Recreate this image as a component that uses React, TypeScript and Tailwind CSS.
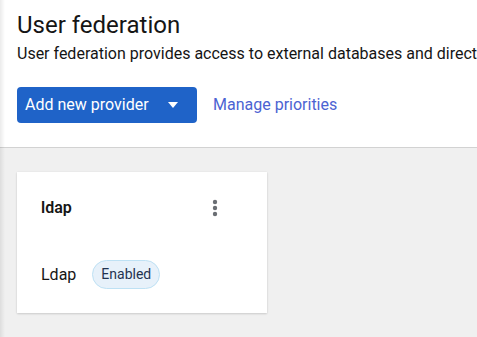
import React from "react";

export default function App() {
  return (
    <div
      className="relative w-[477px] h-[337px] overflow-hidden bg-[#f0f0f0]"
      style={{ fontFamily: 'Roboto, "Liberation Sans", sans-serif' }}
    >
      <div className="pointer-events-none absolute left-0 top-0 h-full w-[5px] bg-gradient-to-r from-[#00000014] to-transparent" />
      <div className="bg-white border-b border-[#d2d2d2] h-[148px] pl-[17px] pt-[7px]">
        <h1 className="text-[24px] leading-[36px] text-[#151515] whitespace-nowrap">User federation</h1>
        <p className="text-[16px] leading-[22px] text-[#151515] whitespace-nowrap">
          User federation provides access to external databases and directories, such as LDAP and Active Directory.
        </p>
        <div className="flex items-center mt-[22px] gap-[16px]">
          <button className="h-[36px] w-[180px] rounded-[4px] bg-[#1f63c8] text-white text-[16px] flex items-center pl-[8px] pr-[16px] justify-between">
            <span>Add new provider</span>
            <svg width="10" height="6" viewBox="0 0 10 6" className="mr-[3px]">
              <path d="M0 0 L10 0 L5 6 Z" fill="white" />
            </svg>
          </button>
          <a className="text-[16px] text-[#4c63d2]">Manage priorities</a>
        </div>
      </div>
      <div className="pl-[17px] pt-[24px]">
        <div className="w-[250px] h-[141px] bg-white shadow-[0_1px_2px_rgba(3,3,3,0.14),0_0_2px_rgba(3,3,3,0.06)] px-[24px] pt-[24px]">
          <div className="flex items-center justify-between h-[24px]">
            <span className="text-[16px] font-semibold text-[#151515]">ldap</span>
            <svg width="6" height="18" viewBox="0 0 6 18" className="mr-[25px]">
              <circle cx="3" cy="3" r="2.2" fill="#6a6e73" />
              <circle cx="3" cy="9" r="2.2" fill="#6a6e73" />
              <circle cx="3" cy="15" r="2.2" fill="#6a6e73" />
            </svg>
          </div>
          <div className="flex items-center gap-[16px] mt-[40px]">
            <span className="text-[16px] text-[#151515]">Ldap</span>
            <span className="h-[29px] px-[8px] flex items-center rounded-full bg-[#e7f1fa] border border-[#bee1f4] text-[14px] text-[#1f3350]">
              Enabled
            </span>
          </div>
        </div>
      </div>
    </div>
  );
}
